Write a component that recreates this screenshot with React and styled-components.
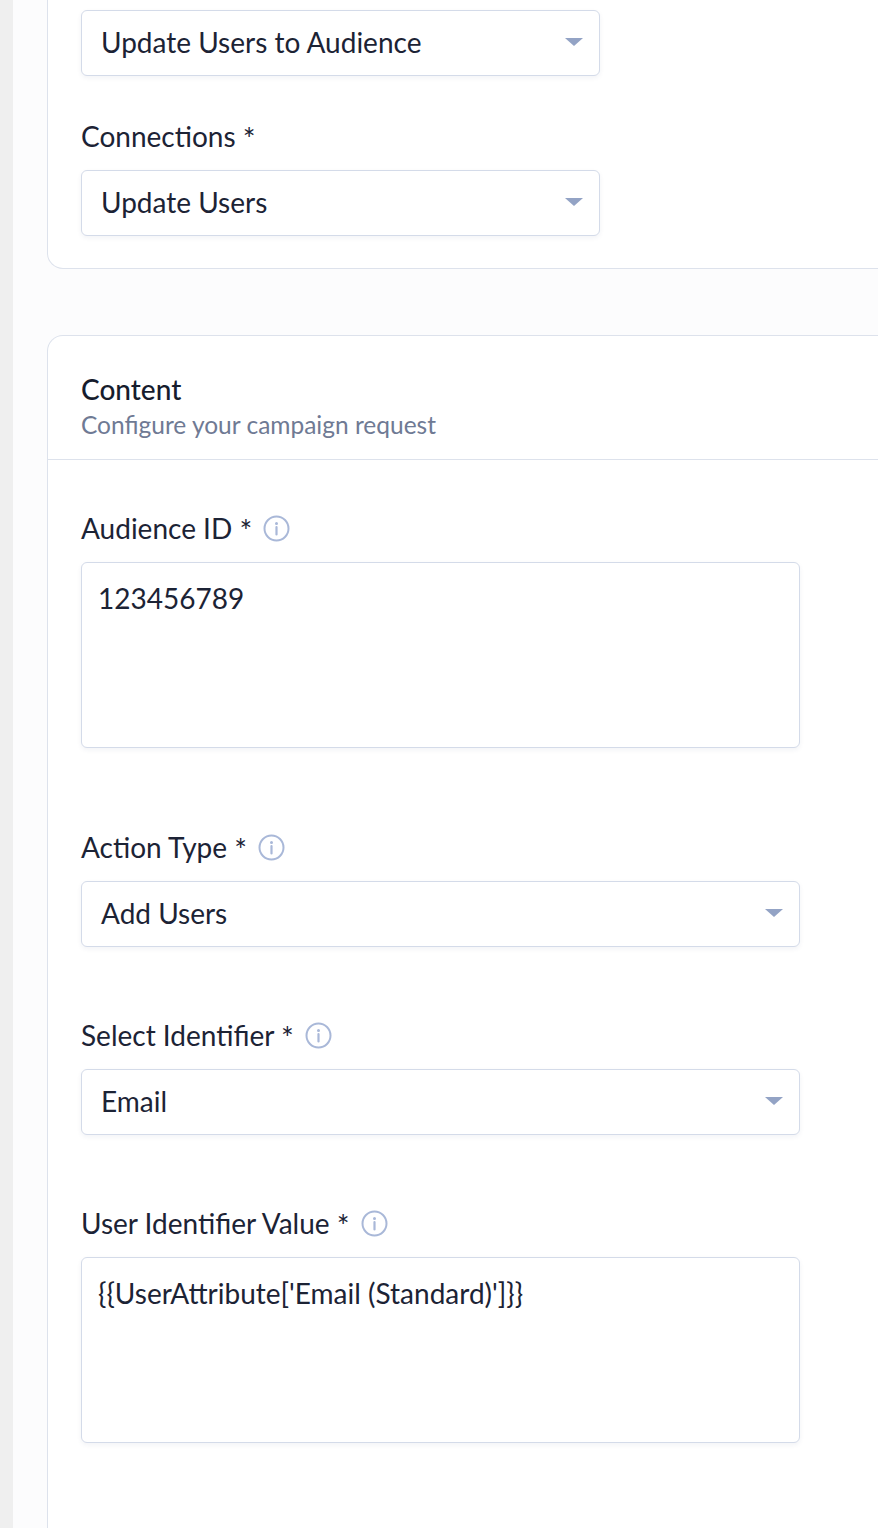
import React from 'react'
import styled, { createGlobalStyle } from 'styled-components'

const GlobalStyle = createGlobalStyle`
  html, body {
    margin: 0;
    padding: 0;
    background: #fcfcfd;
  }
  body {
    font-family: Lato, "Noto Sans", sans-serif;
    color: #1c2335;
  }
`

const InfoIcon = () => (
  <svg width="27" height="27" viewBox="0 0 27 27" fill="none">
    <circle cx="13.5" cy="13.5" r="12" stroke="#a9b8d8" strokeWidth="2" />
    <circle cx="13.5" cy="8.4" r="1.5" fill="#a9b8d8" />
    <line x1="13.5" y1="12" x2="13.5" y2="19.5" stroke="#a9b8d8" strokeWidth="2.2" strokeLinecap="round" />
  </svg>
)

function Select({ value, wide }) {
  return (
    <SelectBox $wide={wide}>
      <span>{value}</span>
      <Caret />
    </SelectBox>
  )
}

function Field({ label, info, children, after, top }) {
  return (
    <FieldWrap $after={after} $top={top}>
      <Label>
        <span>
          {label} <Star>*</Star>
        </span>
        {info && <InfoIcon />}
      </Label>
      {children}
    </FieldWrap>
  )
}

export default function App() {
  return (
    <Page>
      <GlobalStyle />
      <Strip />
      <Main>
        <TopCard>
          <Select value="Update Users to Audience" />
          <Field label="Connections" top={43}>
            <Select value="Update Users" />
          </Field>
        </TopCard>

        <ContentCard>
          <CardHeader>
            <Title>Content</Title>
            <Subtitle>Configure your campaign request</Subtitle>
          </CardHeader>
          <CardBody>
            <Field label="Audience ID" info after={82}>
              <TextBox>123456789</TextBox>
            </Field>
            <Field label="Action Type" info after={71}>
              <Select value="Add Users" wide />
            </Field>
            <Field label="Select Identifier" info after={71}>
              <Select value="Email" wide />
            </Field>
            <Field label="User Identifier Value" info after={71}>
              <TextBox>{"{{UserAttribute['Email (Standard)']}}"}</TextBox>
            </Field>
          </CardBody>
        </ContentCard>
      </Main>
    </Page>
  )
}

const Page = styled.div`
  display: flex;
  min-height: 1528px;
  overflow: hidden;
`

const Strip = styled.div`
  width: 13px;
  flex-shrink: 0;
  background: #efefef;
`

const Main = styled.div`
  flex: 1;
  padding-left: 34px;
  margin-right: -30px;
  display: flex;
  flex-direction: column;
  gap: 66px;
`

const TopCard = styled.div`
  background: #ffffff;
  border: 1.5px solid #dde2ec;
  border-top: none;
  border-radius: 0 0 0 16px;
  padding: 10px 0 32px 33px;
`

const ContentCard = styled.div`
  flex: 1;
  background: #ffffff;
  border: 1.5px solid #dde2ec;
  border-bottom: none;
  border-radius: 16px 0 0 0;
`

const CardHeader = styled.div`
  padding: 36px 0 19px 33px;
  border-bottom: 1.5px solid #dde2ec;
`

const Title = styled.div`
  font-size: 28px;
  line-height: 34px;
  font-weight: 500;
  color: #161c2d;
`

const Subtitle = styled.div`
  margin-top: 4px;
  font-size: 24.5px;
  line-height: 30px;
  color: #6f7a94;
`

const CardBody = styled.div`
  padding: 51px 0 0 33px;
`

const FieldWrap = styled.div`
  margin-top: ${p => p.$top || 0}px;
  margin-bottom: ${p => p.$after || 0}px;
`

const Label = styled.div`
  display: flex;
  align-items: center;
  gap: 11px;
  font-size: 28px;
  line-height: 34px;
  height: 34px;
  margin-bottom: 17px;
  color: #1c2335;
`

const Star = styled.span`
  font-size: 30px;
  line-height: 0;
  position: relative;
  top: 3px;
`

const SelectBox = styled.div`
  box-sizing: border-box;
  width: ${p => (p.$wide ? '719px' : '519px')};
  height: 66px;
  display: flex;
  align-items: center;
  justify-content: space-between;
  padding: 0 16px 2px 19px;
  background: #ffffff;
  border: 1.5px solid #d4dbe9;
  border-radius: 6px;
  box-shadow: 0 2px 5px rgba(40, 55, 95, 0.06);
  font-size: 28px;
  color: #1c2335;
`

const Caret = styled.span`
  width: 0;
  height: 0;
  border-left: 9px solid transparent;
  border-right: 9px solid transparent;
  border-top: 8px solid #93a3c5;
`

const TextBox = styled.div`
  box-sizing: border-box;
  width: 719px;
  height: 186px;
  padding: 18px 16px;
  background: #ffffff;
  border: 1.5px solid #d4dbe9;
  border-radius: 6px;
  box-shadow: 0 2px 5px rgba(40, 55, 95, 0.06);
  font-size: 28px;
  line-height: 34px;
  color: #1c2335;
`
